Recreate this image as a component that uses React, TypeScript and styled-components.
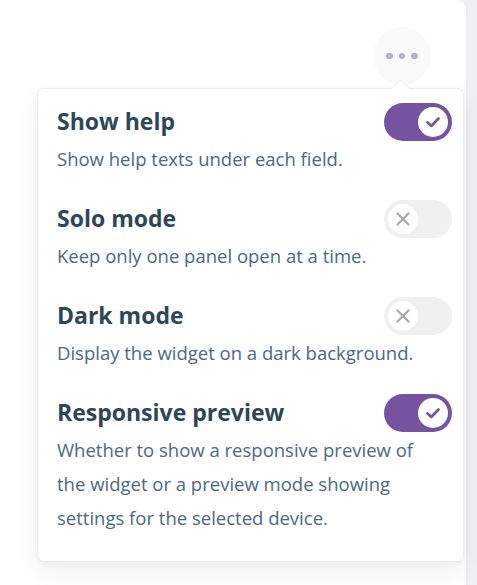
import React from "react";
import styled, { createGlobalStyle } from "styled-components";

const Global = createGlobalStyle`
  html, body { margin: 0; padding: 0; }
  body {
    background: #eef0f2;
    font-family: "Open Sans", "Lato", sans-serif;
    -webkit-font-smoothing: antialiased;
  }
`;

const Page = styled.div`
  display: flex;
  width: 477px;
  height: 585px;
  overflow: hidden;
`;

const Panel = styled.div`
  width: 466px;
  background: #ffffff;
  border-top-right-radius: 10px;
  padding-top: 27px;
  box-sizing: border-box;
`;

const ButtonRow = styled.div`
  display: flex;
  justify-content: flex-end;
  padding-right: 35px;
`;

const DotsButton = styled.button`
  width: 58px;
  height: 58px;
  border-radius: 50%;
  border: none;
  background: #fafafb;
  display: flex;
  align-items: center;
  justify-content: center;
  gap: 6px;
  padding: 0;
  cursor: pointer;
`;

const Dot = styled.span`
  width: 6.5px;
  height: 6.5px;
  border-radius: 50%;
  background: #b4b5bd;
`;

const Card = styled.div`
  position: relative;
  margin: 3px 2px 0 37px;
  background: #ffffff;
  border: 1px solid #ececef;
  border-radius: 7px;
  box-shadow: 0 10px 24px rgba(30, 40, 60, 0.07), 0 2px 6px rgba(30, 40, 60, 0.04);
  padding: 13px 11px 26px 19px;
  display: flex;
  flex-direction: column;
  gap: 23px;

  &::before {
    content: "";
    position: absolute;
    top: -7px;
    right: 55px;
    width: 14px;
    height: 14px;
    background: #ffffff;
    border-left: 1px solid #ececef;
    border-top: 1px solid #ececef;
    transform: rotate(45deg);
    border-top-left-radius: 2px;
  }
`;

const Item = styled.div`
  display: flex;
  flex-direction: column;
`;

const ItemHead = styled.div`
  display: flex;
  align-items: center;
  justify-content: space-between;
  height: 40px;
`;

const Title = styled.div`
  font-size: 23px;
  font-weight: 700;
  color: #2d4758;
  padding-bottom: 3px;
`;

const Desc = styled.div`
  font-size: 18.5px;
  line-height: 34px;
  color: #4b6a80;
  padding-right: 26px;
`;

const Track = styled.div<{ $on: boolean }>`
  width: 68px;
  height: 38px;
  border-radius: 19px;
  background: ${(p) => (p.$on ? "#7553a1" : "#f0f0f1")};
  display: flex;
  align-items: center;
  justify-content: ${(p) => (p.$on ? "flex-end" : "flex-start")};
  padding: 0 4px;
  box-sizing: border-box;
  flex-shrink: 0;
`;

const Knob = styled.div`
  width: 30px;
  height: 30px;
  border-radius: 50%;
  background: #ffffff;
  display: flex;
  align-items: center;
  justify-content: center;
`;

function Toggle({ on }: { on: boolean }) {
  return (
    <Track $on={on}>
      <Knob>
        {on ? (
          <svg width="18" height="18" viewBox="0 0 18 18">
            <path d="M3.5 9.5 L7.3 13 L14.5 5.5" fill="none" stroke="#7553a1" strokeWidth="2.6" strokeLinecap="round" strokeLinejoin="round" />
          </svg>
        ) : (
          <svg width="16" height="16" viewBox="0 0 16 16">
            <path d="M2.5 2.5 L13.5 13.5 M13.5 2.5 L2.5 13.5" fill="none" stroke="#a9a9ad" strokeWidth="2.2" strokeLinecap="round" />
          </svg>
        )}
      </Knob>
    </Track>
  );
}

const settings = [
  { title: "Show help", desc: "Show help texts under each field.", on: true },
  { title: "Solo mode", desc: "Keep only one panel open at a time.", on: false },
  { title: "Dark mode", desc: "Display the widget on a dark background.", on: false },
  {
    title: "Responsive preview",
    desc: "Whether to show a responsive preview of the widget or a preview mode showing settings for the selected device.",
    on: true,
  },
];

export default function App() {
  return (
    <>
      <Global />
      <Page>
        <Panel>
          <ButtonRow>
            <DotsButton aria-label="More">
              <Dot />
              <Dot />
              <Dot />
            </DotsButton>
          </ButtonRow>
          <Card>
            {settings.map((s) => (
              <Item key={s.title}>
                <ItemHead>
                  <Title>{s.title}</Title>
                  <Toggle on={s.on} />
                </ItemHead>
                <Desc>{s.desc}</Desc>
              </Item>
            ))}
          </Card>
        </Panel>
      </Page>
    </>
  );
}
